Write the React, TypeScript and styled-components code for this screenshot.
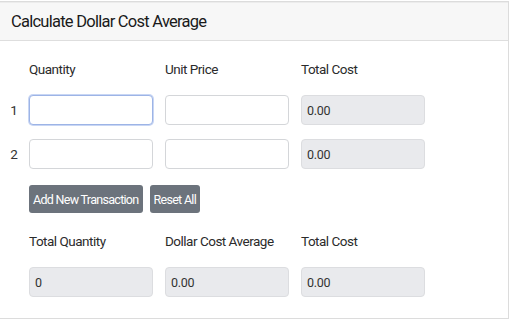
import styled, { createGlobalStyle } from "styled-components";

const GlobalStyle = createGlobalStyle`
  html, body {
    margin: 0;
    padding: 0;
    background: #ffffff;
    overflow: hidden;
  }
  body {
    font-family: "Roboto", "Liberation Sans", sans-serif;
    color: #212529;
  }
`;

const Card = styled.div`
  margin: 1px 0 0 -1px;
  width: 510px;
  height: 318px;
  border: 1px solid #dcdcdc;
  display: flex;
  flex-direction: column;
  box-sizing: border-box;
`;

const Header = styled.div`
  height: 37px;
  background: #f7f7f7;
  border-top: 1px solid #ececec;
  border-bottom: 1px solid #dedede;
  display: flex;
  align-items: center;
  padding-left: 11px;
  font-size: 16.5px;
  letter-spacing: -0.75px;
  color: #1a1a1a;
`;

const Body = styled.div`
  display: flex;
  flex-direction: column;
  padding: 18px 0 0 9px;
`;

const Row = styled.div<{ $mt?: number; $gap?: number }>`
  display: flex;
  align-items: center;
  gap: ${(p) => p.$gap ?? 12}px;
  margin-top: ${(p) => p.$mt ?? 0}px;
`;

const RowNum = styled.div<{ $w?: number }>`
  width: ${(p) => p.$w ?? 10}px;
  margin-right: -2px;
  font-size: 13.5px;
  color: #333;
  text-align: center;
`;

const Label = styled.div`
  width: 124px;
  height: 20px;
  line-height: 20px;
  font-size: 13.5px;
  letter-spacing: -0.5px;
  white-space: nowrap;
  color: #2b2b2b;
`;

const Field = styled.input<{ $focus?: boolean }>`
  width: 124px;
  height: 30px;
  box-sizing: border-box;
  border: 1px solid ${(p) => (p.$focus ? "#9db4e6" : "#d4d6d9")};
  box-shadow: ${(p) => (p.$focus ? "0 0 0 1px #c8d6f4" : "none")};
  border-radius: 4px;
  background: #ffffff;
  padding: 0 5px;
  font-family: inherit;
  font-size: 12.5px;
  letter-spacing: -0.3px;
  color: #333;
  outline: none;

  &:read-only {
    background: #e9eaed;
    border-color: #dcdde0;
  }
`;

const Button = styled.button`
  height: 28px;
  padding: 0 4px;
  border: none;
  border-radius: 3px;
  background: #6c737c;
  color: #ffffff;
  font-family: inherit;
  font-size: 12.5px;
  letter-spacing: -0.7px;
  cursor: pointer;
`;

export default function App() {
  return (
    <>
      <GlobalStyle />
      <Card>
        <Header>Calculate Dollar Cost Average</Header>
        <Body>
          <Row>
            <RowNum />
            <Label>Quantity</Label>
            <Label>Unit Price</Label>
            <Label>Total Cost</Label>
          </Row>
          <Row $mt={16}>
            <RowNum>1</RowNum>
            <Field $focus />
            <Field />
            <Field readOnly value="0.00" />
          </Row>
          <Row $mt={14}>
            <RowNum>2</RowNum>
            <Field />
            <Field />
            <Field readOnly value="0.00" />
          </Row>
          <Row $mt={16} $gap={7}>
            <RowNum $w={15} />
            <Button>Add New Transaction</Button>
            <Button>Reset All</Button>
          </Row>
          <Row $mt={18}>
            <RowNum />
            <Label>Total Quantity</Label>
            <Label>Dollar Cost Average</Label>
            <Label>Total Cost</Label>
          </Row>
          <Row $mt={16}>
            <RowNum />
            <Field readOnly value="0" />
            <Field readOnly value="0.00" />
            <Field readOnly value="0.00" />
          </Row>
        </Body>
      </Card>
    </>
  );
}
